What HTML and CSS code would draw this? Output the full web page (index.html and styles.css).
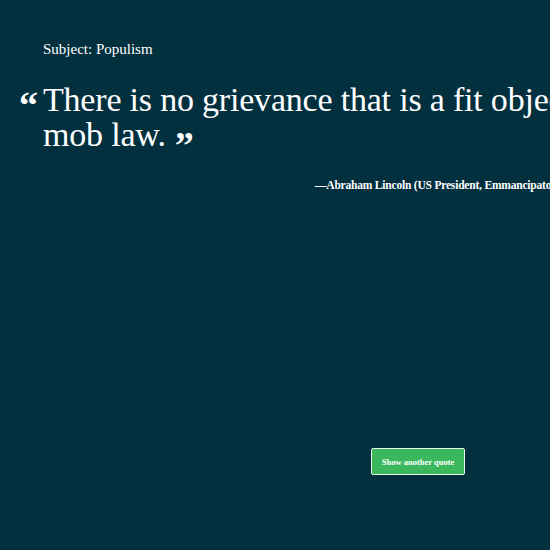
FILE: index.html
```html
<!DOCTYPE html>
<html>
<head>
<meta charset="utf-8">
<link rel="stylesheet" href="styles.css">
</head>
<body>
<main class="page">
  <p class="subject">Subject: Populism</p>
  <blockquote class="quote">
    <span class="mark open">“</span>There is no grievance that is a fit object of redress by<br>mob law.<span class="mark close">”</span>
  </blockquote>
  <p class="author">—Abraham Lincoln (US President, Emmancipator of Slaves)</p>
  <div class="actions">
    <button class="btn">Show another quote</button>
  </div>
</main>
</body>
</html>
```

FILE: styles.css
```css
html, body {
  margin: 0;
  background: #03303f;
  overflow: hidden;
}
body {
  width: 550px;
  height: 550px;
  font-family: "Liberation Serif", "DejaVu Serif", serif;
  color: #ffffff;
}
.page {
  width: 836px;
  padding: 40px 0 0 43px;
  box-sizing: border-box;
  display: flex;
  flex-direction: column;
}
.subject {
  margin: 0;
  font-size: 15px;
  line-height: 18px;
}
.quote {
  position: relative;
  margin: 24px 0 0 0;
  white-space: nowrap;
  font-size: 34px;
  line-height: 35px;
  letter-spacing: -0.2px;
}
.mark {
  font-family: "Liberation Serif", serif;
  font-size: 38px;
  font-weight: bold;
  line-height: 0;
}
.mark.open {
  position: absolute;
  left: -24px;
  top: 23px;
}
.mark.close {
  margin-left: 9px;
  position: relative;
  top: 12px;
}
.author {
  margin: 27px 0 0 272px;
  font-size: 11.5px;
  font-weight: bold;
  letter-spacing: -0.2px;
  white-space: nowrap;
}
.actions {
  display: flex;
  justify-content: flex-start;
  margin-top: 257px;
  padding-left: 328px;
}
.btn {
  background: #3bb75e;
  color: #fff;
  border: 1px solid #e9f4ec;
  border-radius: 2px;
  font-family: "Liberation Serif", serif;
  font-weight: bold;
  font-size: 8.5px;
  width: 94px;
  height: 27px;
  padding: 0;
}
```
